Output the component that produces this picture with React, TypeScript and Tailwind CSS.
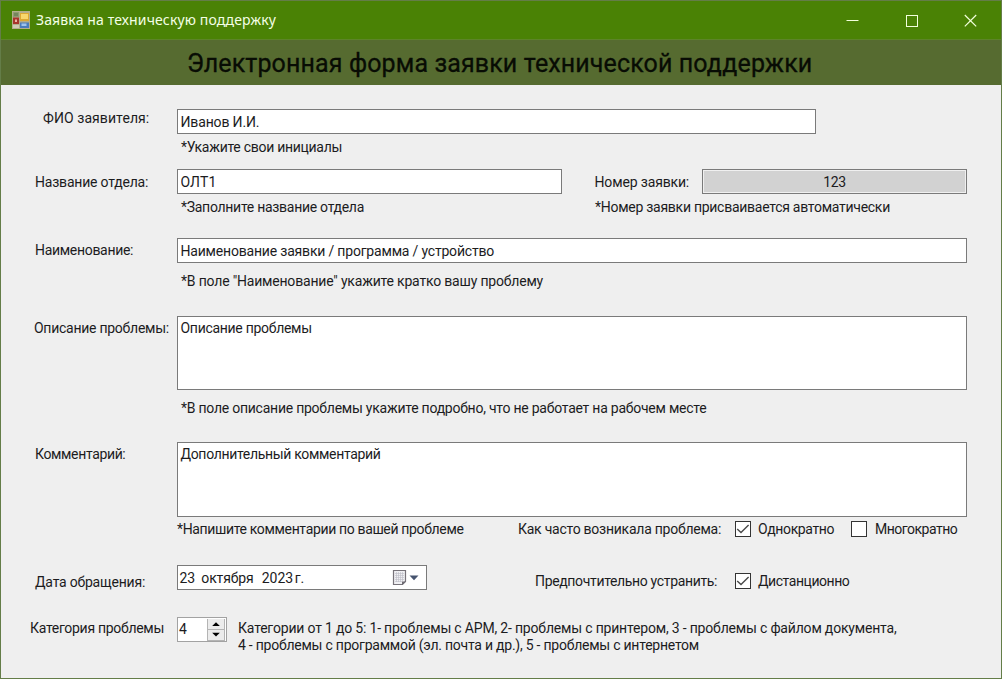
import type { ReactNode } from 'react'

const field = 'block border border-[#7a7a7a] bg-white pl-[2.5px] outline-none'

function Label({ children, className }: { children: ReactNode; className: string }) {
  return <div className={`w-[176px] shrink-0 whitespace-nowrap ${className}`}>{children}</div>
}

function CheckBox({ checked }: { checked?: boolean }) {
  return (
    <span className="block size-[16px] shrink-0 border border-[#333] bg-white">
      {checked && (
        <svg viewBox="0 0 14 14" className="block size-[14px]" fill="none" stroke="#4a4a4a" strokeWidth="1.4">
          <path d="M1.2 7 L5 10.6 L12.6 3" />
        </svg>
      )}
    </span>
  )
}

function AppIcon() {
  return (
    <svg viewBox="0 0 18 18" className="block size-[18px]">
      <rect x="0" y="0" width="18" height="18" fill="#b3ad8c" />
      <rect x="1" y="1" width="6" height="5" fill="#8f9a70" />
      <rect x="2" y="2" width="4" height="3" fill="#75855c" />
      <rect x="1" y="6.5" width="6" height="6.5" fill="#a8342a" />
      <rect x="3" y="8.5" width="2" height="2.5" fill="#eeb0a2" />
      <rect x="1" y="14" width="6" height="3" fill="#cfccb4" />
      <rect x="8" y="2" width="9" height="8" fill="#dca832" />
      <rect x="9" y="3" width="7" height="5" fill="#f8d76c" />
      <rect x="8" y="11.5" width="9" height="5.5" fill="#4a7cbc" />
      <rect x="9.5" y="12.5" width="5" height="2.5" fill="#9fc4ec" />
    </svg>
  )
}

function TitleBar() {
  return (
    <div className="flex h-[39px] items-center border-b border-[#5d8429] bg-[#4a8205] pl-[11px]">
      <AppIcon />
      <span className="ml-[6px] font-['Noto_Sans',sans-serif] text-[14px] leading-5 tracking-[0.13px] whitespace-nowrap text-[#f4ffe6]">
        Заявка на техническую поддержку
      </span>
      <div className="mr-[24px] ml-auto flex items-center gap-[46px]">
        <svg viewBox="0 0 13 13" className="block size-[13px]" stroke="#f2ffdc" fill="none">
          <path d="M0.5 6.5 H12.5" />
        </svg>
        <svg viewBox="0 0 13 13" className="block size-[13px]" stroke="#f2ffdc" fill="none">
          <rect x="1.5" y="1.5" width="11" height="11" />
        </svg>
        <svg viewBox="0 0 13 13" className="block size-[13px]" stroke="#f2ffdc" strokeWidth="1.2" fill="none">
          <path d="M0.8 1 L12.2 12.4 M12.2 1 L0.8 12.4" />
        </svg>
      </div>
    </div>
  )
}

function DateField() {
  return (
    <div className="flex h-[25px] w-[250px] items-center border border-[#7a7a7a] bg-white pl-[1.5px]">
      <span className="flex">
        <span>23</span>
        <span className="ml-[6px] tracking-[-0.1px]">октября</span>
        <span className="ml-[8px]">2023</span>
        <span className="ml-[1.5px]">г.</span>
      </span>
      <svg viewBox="0 0 28 16" className="mr-[6px] ml-auto block h-4 w-7">
        <path d="M1.5 0.5 H13.5 V11.5 L10.5 14.5 H1.5 Z" fill="#f0f0f3" stroke="#77737a" strokeWidth="1.2" />
        <path d="M10 15 V11.5 H14 Z" fill="#6e6b73" />
        <path
          d="M3 3.5 H12 M3 5.5 H12 M3 7.5 H12 M3 9.5 H12 M3 11.5 H10 M4.5 2 V12 M6.5 2 V12 M8.5 2 V12 M10.5 2 V11"
          stroke="#bcbcc6"
          strokeWidth="0.6"
        />
        <path d="M17.5 5.5 H26.5 L22 10.3 Z" fill="#46546f" />
      </svg>
    </div>
  )
}

function NumberField() {
  return (
    <div className="flex h-[25px] w-[50px] border border-[#a2a2a2] bg-white pl-[1px]">
      <span className="leading-[22px]">4</span>
      <div className="mt-px mr-[1px] ml-auto flex h-[22px] w-[18px] flex-col gap-px border-x border-b border-[#b4b4b4] bg-[#b4b4b4]">
        <svg viewBox="0 0 16 10" className="block h-[10px] w-4 bg-[#ececec]">
          <path d="M4.2 7 L8 3.2 L11.8 7 Z" fill="#000" />
        </svg>
        <svg viewBox="0 0 16 10" className="block h-[10px] w-4 bg-[#ececec]">
          <path d="M4.2 2.8 L8 6.6 L11.8 2.8 Z" fill="#000" />
        </svg>
      </div>
    </div>
  )
}

export default function App() {
  return (
    <div className="flex h-[679px] w-[1002px] flex-col overflow-hidden border border-[#647d48] bg-[#efefef] font-['Roboto','Liberation_Sans',sans-serif] text-[14px] leading-5 text-[#1c1c1e]">
      <TitleBar />
      <h1 className="h-[45px] bg-[#566b30] pl-[186px] text-[25px] leading-[47px] tracking-[0.12px] whitespace-nowrap text-[#080c04] [-webkit-text-stroke:0.3px_#080c04]">
        Электронная форма заявки технической поддержки
      </h1>

      <form className="flex flex-col">
        <section className="h-[84px] pt-[24px]">
          <div className="flex h-[25px]">
            <Label className="-mt-[1px] pl-[42px] tracking-[0.08px]">ФИО заявителя:</Label>
            <input className={`${field} h-[25px] w-[639px] tracking-[-0.15px]`} defaultValue="Иванов И.И." />
          </div>
          <p className="mt-[3px] pl-[180px] tracking-[-0.28px]">*Укажите свои инициалы</p>
        </section>

        <section className="flex h-[69px]">
          <Label className="pt-[3px] pl-[34px] tracking-[-0.2px]">Название отдела:</Label>
          <div className="w-[416px]">
            <input className={`${field} h-[25px] w-[385px] tracking-[0.2px]`} defaultValue="ОЛТ1" />
            <p className="mt-[3px] pl-[4px] tracking-[-0.28px]">*Заполните название отдела</p>
          </div>
          <div>
            <div className="flex h-[25px]">
              <span className="w-[109px] pt-[3px] pl-[1.5px] tracking-[-0.15px]">Номер заявки:</span>
              <input
                readOnly
                className="block h-[25px] w-[265px] border border-[#7a7a7a] bg-[#d2d2d2] text-center tracking-[-0.3px] shadow-[inset_0_0_0_1px_#f0f0f0] outline-none"
                defaultValue="123"
              />
            </div>
            <p className="mt-[3px] pl-[2px] tracking-[-0.27px]">*Номер заявки присваивается автоматически</p>
          </div>
        </section>

        <section className="flex h-[78px]">
          <Label className="pt-[2px] pl-[34px] tracking-[-0.31px]">Наименование:</Label>
          <div>
            <input
              className={`${field} h-[25px] w-[790px] tracking-[-0.19px]`}
              defaultValue="Наименование заявки / программа / устройство"
            />
            <p className="mt-[8px] pl-[4px] tracking-[-0.19px]">
              *В поле "Наименование" укажите кратко вашу проблему
            </p>
          </div>
        </section>

        <section className="flex h-[126px]">
          <Label className="pt-[2px] pl-[33px] tracking-[-0.26px]">Описание проблемы:</Label>
          <div>
            <textarea
              className={`${field} h-[74px] w-[790px] resize-none pt-[1px] tracking-[-0.29px]`}
              defaultValue="Описание проблемы"
            />
            <p className="mt-[8px] pl-[4px] tracking-[-0.245px]">
              *В поле описание проблемы укажите подробно, что не работает на рабочем месте
            </p>
          </div>
        </section>

        <section className="flex h-[123px]">
          <Label className="pt-[2px] pl-[34px] tracking-[-0.36px]">Комментарий:</Label>
          <div>
            <textarea
              className={`${field} h-[75px] w-[790px] resize-none pt-[1px] tracking-[-0.32px]`}
              defaultValue="Дополнительный комментарий"
            />
            <div className="mt-[2px] flex h-[20px] items-center whitespace-nowrap">
              <p className="w-[341px] tracking-[-0.35px]">*Напишите комментарии по вашей проблеме</p>
              <span className="w-[217px] tracking-[-0.25px]">Как часто возникала проблема:</span>
              <label className="flex w-[116px] items-center gap-[7px] tracking-[-0.37px]">
                <CheckBox checked />
                Однократно
              </label>
              <label className="flex items-center gap-[8px] tracking-[-0.5px]">
                <CheckBox />
                Многократно
              </label>
            </div>
          </div>
        </section>

        <section className="flex h-[52px]">
          <Label className="pt-[7px] pl-[34px] tracking-[-0.2px]">Дата обращения:</Label>
          <div className="w-[358px]">
            <DateField />
          </div>
          <div className="flex h-[32px] items-center whitespace-nowrap">
            <span className="w-[200px] tracking-[-0.34px]">Предпочтительно устранить:</span>
            <label className="flex items-center gap-[7px] tracking-[-0.45px]">
              <CheckBox checked />
              Дистанционно
            </label>
          </div>
        </section>

        <section className="flex">
          <Label className="pt-[1px] pl-[29px] tracking-[-0.3px]">Категория проблемы</Label>
          <NumberField />
          <p className="ml-[11px] pt-[3px] leading-[16.5px] whitespace-nowrap">
            <span className="block tracking-[-0.185px]">
              Категории от 1 до 5: 1- проблемы с АРМ, 2- проблемы с принтером, 3 - проблемы с файлом документа,
            </span>
            <span className="block tracking-[-0.24px]">
              4 - проблемы с программой (эл. почта и др.), 5 - проблемы с интернетом
            </span>
          </p>
        </section>
      </form>
    </div>
  )
}
